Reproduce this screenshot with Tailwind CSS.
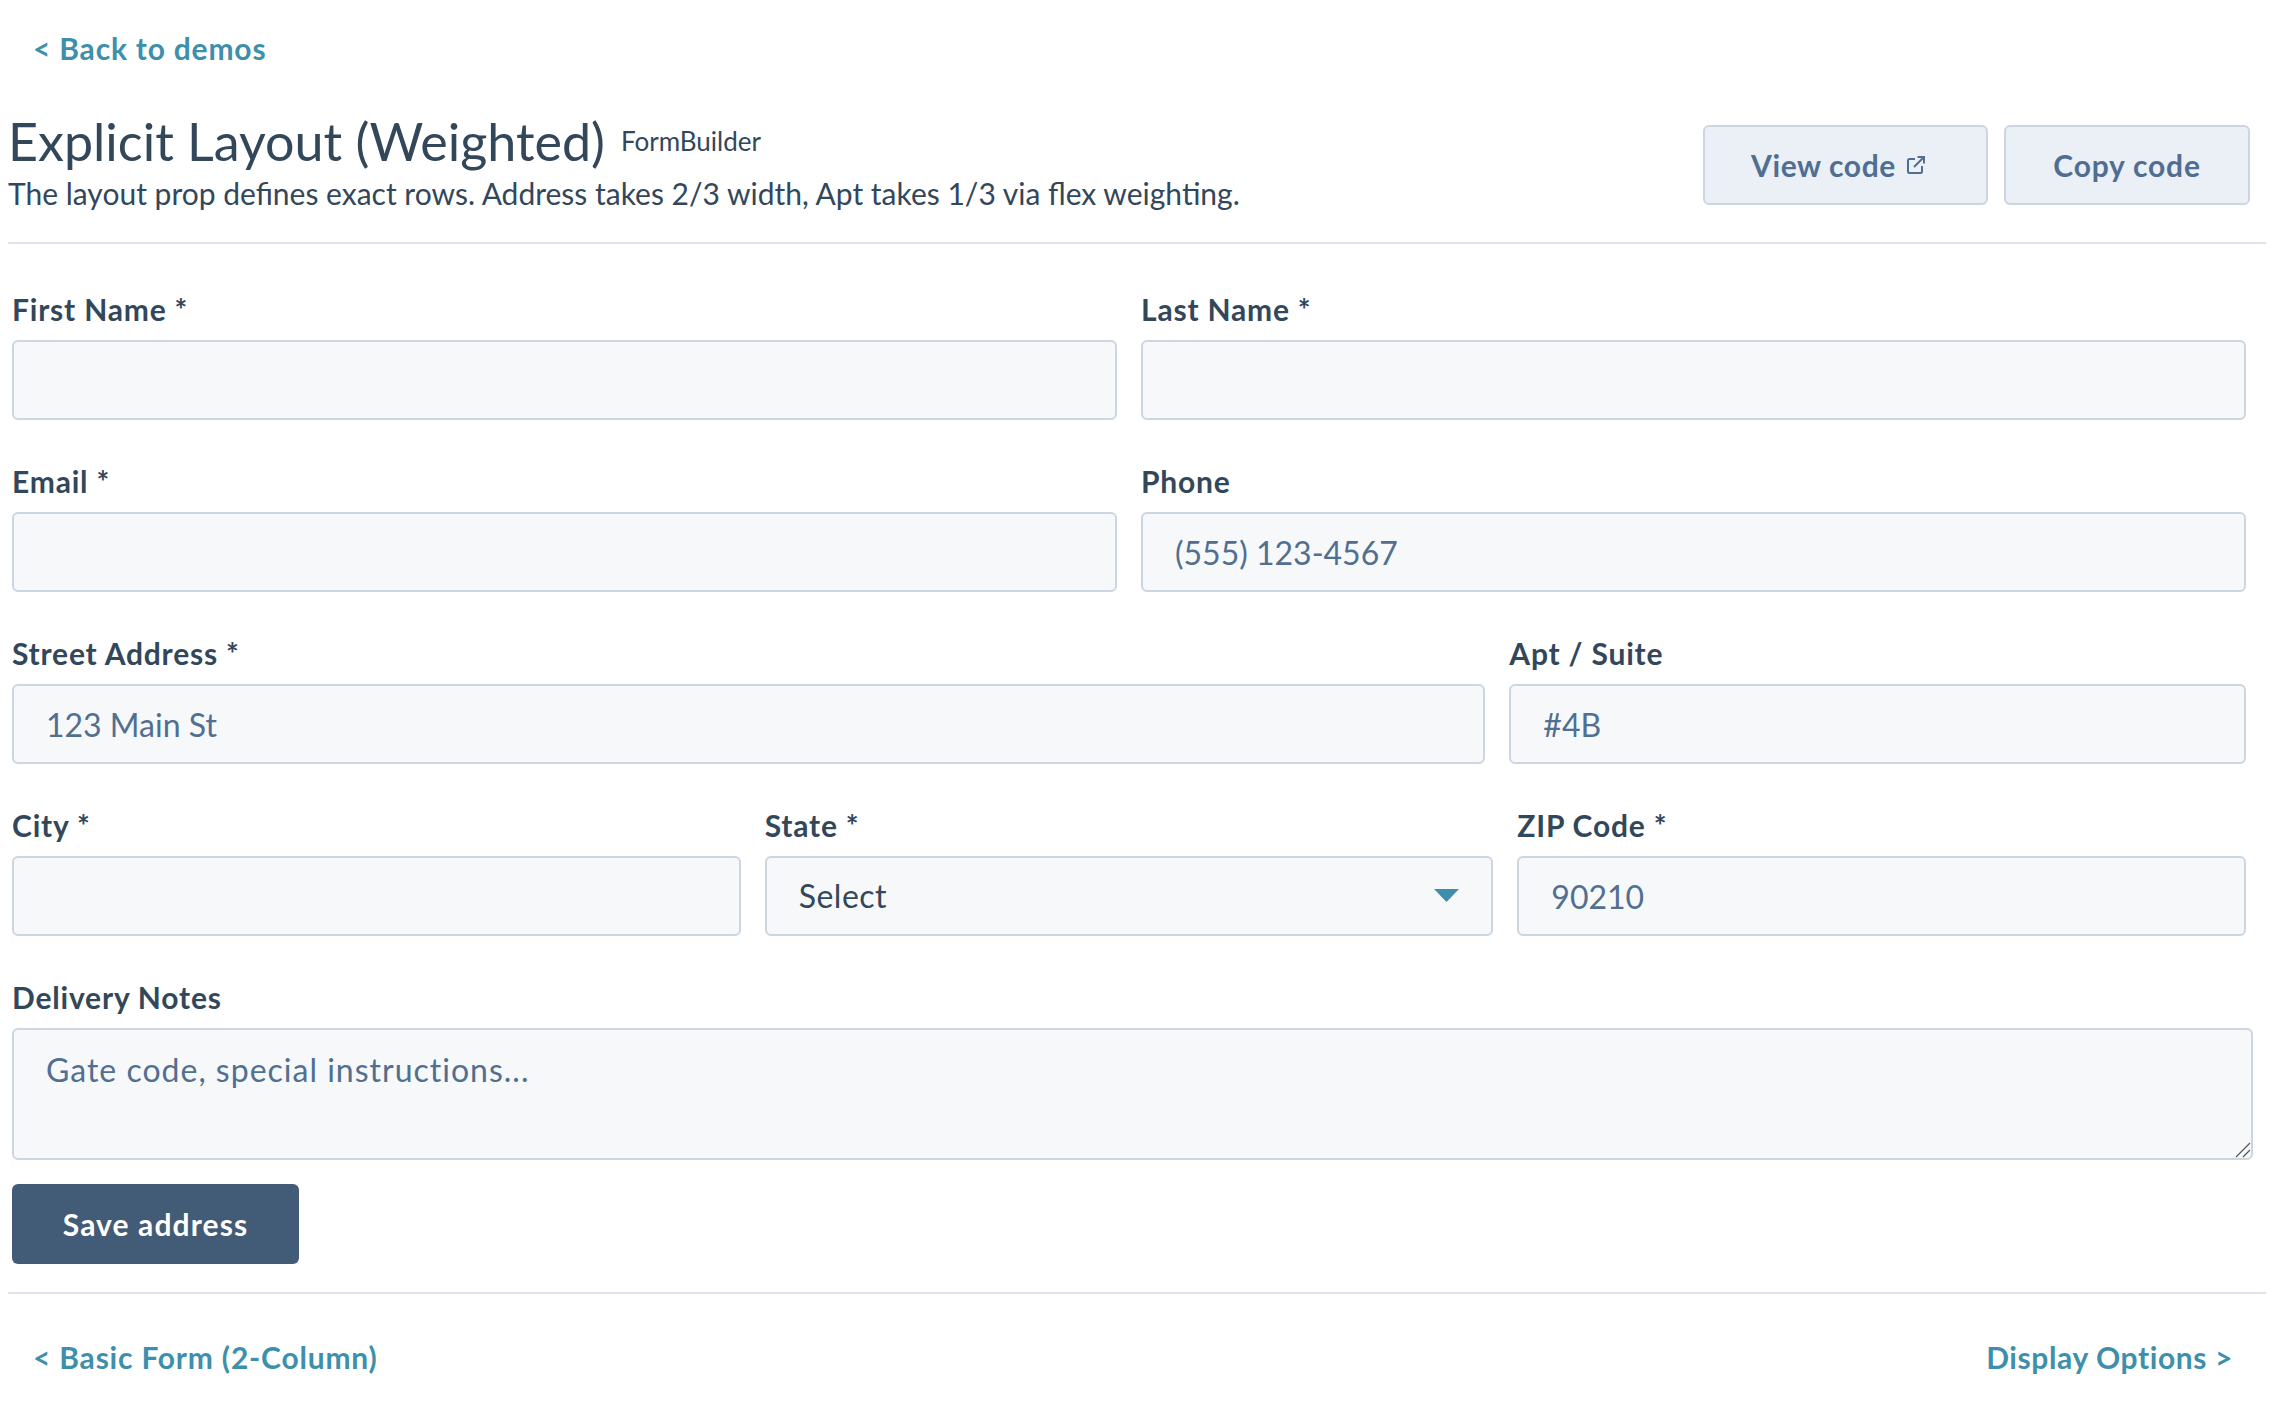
<!DOCTYPE html>
<html lang="en">
<head>
  <meta charset="UTF-8">
  <title>Explicit Layout (Weighted)</title>
  <script src="https://cdn.jsdelivr.net/npm/@tailwindcss/browser@4"></script>
</head>
<body class="bg-white text-[#33475b] font-['Lato',sans-serif] h-[1406px] overflow-hidden">
  <div class="px-[8px]">
    <!-- Top link -->
    <div class="h-[125px] pl-[25px] pt-[29px]">
      <a href="#" class="block text-[30px] leading-[38px] tracking-[0.8px] font-bold text-[#3e8fab]">&lt; Back to demos</a>
    </div>

    <!-- Header -->
    <div class="flex justify-between h-[119px] border-b-2 border-[#dfe3eb]">
      <div>
        <div class="flex items-center gap-[16px] h-[36px] -mt-[2px]">
          <h1 class="text-[52px] leading-[36px] font-normal">Explicit Layout (Weighted)</h1>
          <span class="text-[26px] leading-[36px]">FormBuilder</span>
        </div>
        <p class="text-[30px] leading-[38px] mt-[15px]">The layout prop defines exact rows. Address takes 2/3 width, Apt takes 1/3 via flex weighting.</p>
      </div>
      <div class="flex gap-[16px] h-[80px] pr-[16px]">
        <button class="flex items-center justify-center gap-[10px] w-[285px] pr-[14px] rounded-[6px] border-2 border-[#cbd6e2] bg-[#eaf0f6] text-[#506e91] text-[30px] tracking-[0.6px] font-bold">
          View code
          <svg class="w-[20px] h-[20px]" viewBox="0 0 20 20" fill="none" stroke="#506e91" stroke-width="2"><path d="M9 4H3.5A1.5 1.5 0 0 0 2 5.5v11A1.5 1.5 0 0 0 3.5 18h11a1.5 1.5 0 0 0 1.5-1.5V11"/><path d="M8 12 18 2M11.5 2H18v6.5"/></svg>
        </button>
        <button class="w-[246px] rounded-[6px] border-2 border-[#cbd6e2] bg-[#eaf0f6] text-[#506e91] text-[30px] tracking-[0.8px] font-bold">Copy code</button>
      </div>
    </div>

    <!-- Form -->
    <form class="pl-[4px] pt-[49px]">
      <div class="w-[2234px] flex flex-col gap-[45px]">
        <div class="flex gap-[24px]">
          <label class="flex-1 block">
            <span class="block text-[30px] leading-[32px] tracking-[0.8px] font-bold mb-[15px]">First Name *</span>
            <input class="w-full h-[80px] px-[32px] rounded-[6px] border-2 border-[#cbd6e2] bg-[#f6f8fa] text-[32px] text-[#516f90] outline-none">
          </label>
          <label class="flex-1 block">
            <span class="block text-[30px] leading-[32px] tracking-[0.8px] font-bold mb-[15px]">Last Name *</span>
            <input class="w-full h-[80px] px-[32px] rounded-[6px] border-2 border-[#cbd6e2] bg-[#f6f8fa] text-[32px] text-[#516f90] outline-none">
          </label>
        </div>
        <div class="flex gap-[24px]">
          <label class="flex-1 block">
            <span class="block text-[30px] leading-[32px] tracking-[0.8px] font-bold mb-[15px]">Email *</span>
            <input class="w-full h-[80px] px-[32px] rounded-[6px] border-2 border-[#cbd6e2] bg-[#f6f8fa] text-[32px] text-[#516f90] outline-none">
          </label>
          <label class="flex-1 block">
            <span class="block text-[30px] leading-[32px] tracking-[0.8px] font-bold mb-[15px]">Phone</span>
            <input placeholder="(555) 123-4567" class="w-full h-[80px] px-[32px] rounded-[6px] border-2 border-[#cbd6e2] bg-[#f6f8fa] text-[32px] text-[#516f90] placeholder-[#516f90] outline-none">
          </label>
        </div>
        <div class="flex gap-[24px]">
          <label class="flex-[2] min-w-0 block">
            <span class="block text-[30px] leading-[32px] tracking-[0.8px] font-bold mb-[15px]">Street Address *</span>
            <input placeholder="123 Main St" class="w-full h-[80px] px-[32px] rounded-[6px] border-2 border-[#cbd6e2] bg-[#f6f8fa] text-[32px] text-[#516f90] placeholder-[#516f90] outline-none">
          </label>
          <label class="flex-1 min-w-0 block">
            <span class="block text-[30px] leading-[32px] tracking-[0.8px] font-bold mb-[15px]">Apt / Suite</span>
            <input placeholder="#4B" class="w-full h-[80px] px-[32px] rounded-[6px] border-2 border-[#cbd6e2] bg-[#f6f8fa] text-[32px] text-[#516f90] placeholder-[#516f90] outline-none">
          </label>
        </div>
        <div class="flex gap-[24px]">
          <label class="flex-1 min-w-0 block">
            <span class="block text-[30px] leading-[32px] tracking-[0.8px] font-bold mb-[15px]">City *</span>
            <input class="w-full h-[80px] px-[32px] rounded-[6px] border-2 border-[#cbd6e2] bg-[#f6f8fa] text-[32px] text-[#516f90] outline-none">
          </label>
          <label class="flex-1 min-w-0 block">
            <span class="block text-[30px] leading-[32px] tracking-[0.8px] font-bold mb-[15px]">State *</span>
            <span class="relative block">
              <select class="appearance-none w-full h-[80px] px-[32px] rounded-[6px] border-2 border-[#cbd6e2] bg-[#f6f8fa] text-[32px] tracking-[0.5px] text-[#33475b] outline-none">
                <option>Select</option>
              </select>
              <svg class="absolute right-[34px] top-[33px] w-[25px] h-[13px] pointer-events-none" viewBox="0 0 25 13"><path d="M0 0h25L12.5 13z" fill="#3e8fab"/></svg>
            </span>
          </label>
          <label class="flex-1 min-w-0 block">
            <span class="block text-[30px] leading-[32px] tracking-[0.8px] font-bold mb-[15px]">ZIP Code *</span>
            <input placeholder="90210" class="w-full h-[80px] px-[32px] rounded-[6px] border-2 border-[#cbd6e2] bg-[#f6f8fa] text-[32px] text-[#516f90] placeholder-[#516f90] outline-none">
          </label>
        </div>
      </div>
      <label class="block w-[2241px] mt-[45px]">
        <span class="block text-[30px] leading-[32px] tracking-[0.8px] font-bold mb-[15px]">Delivery Notes</span>
        <span class="relative block">
          <textarea placeholder="Gate code, special instructions..." class="block w-full h-[132px] px-[32px] py-[20px] resize-none rounded-[6px] border-2 border-[#cbd6e2] bg-[#f6f8fa] text-[32px] leading-[40px] tracking-[1px] text-[#516f90] placeholder-[#516f90] outline-none"></textarea>
          <svg class="absolute right-[2px] bottom-[2px] w-[16px] h-[16px] pointer-events-none" viewBox="0 0 16 16" fill="none" stroke="#555" stroke-width="1.2"><path d="M15 1 1 15M15 8l-7 7"/></svg>
        </span>
      </label>
      <button type="button" class="block mt-[24px] w-[287px] h-[80px] rounded-[6px] bg-[#425b76] text-white text-[30px] tracking-[1.1px] font-bold">Save address</button>
    </form>

    <!-- Prev / next -->
    <div class="flex justify-between mt-[28px] border-t-2 border-[#dfe3eb] pt-[44px] pl-[25px] pr-[33px]">
      <a href="#" class="text-[30px] leading-[38px] tracking-[0.8px] font-bold text-[#3e8fab]">&lt; Basic Form (2-Column)</a>
      <a href="#" class="text-[30px] leading-[38px] tracking-[0.6px] font-bold text-[#3e8fab]">Display Options &gt;</a>
    </div>
  </div>
</body>
</html>
